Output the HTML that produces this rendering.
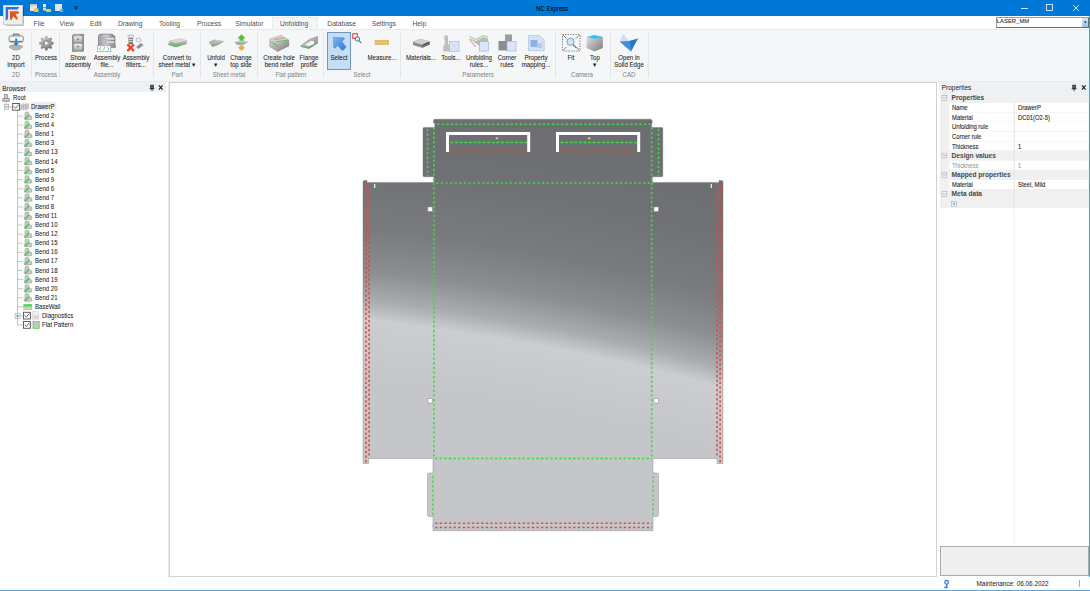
<!DOCTYPE html><html><head><meta charset="utf-8"><style>
*{margin:0;padding:0;box-sizing:border-box}
html,body{width:1090px;height:591px;overflow:hidden;background:#fdfdfd;font-family:"Liberation Sans",sans-serif;color:#1e1e1e}
.a{position:absolute}
.mi{position:absolute;font-size:6.7px;color:#505050;top:19.5px;line-height:7px;white-space:nowrap}
.t{position:absolute;font-size:6.6px;white-space:nowrap;line-height:7px;text-align:center;color:#1a1a1a;width:60px;-webkit-text-stroke:0.06px #1a1a1a;transform:scaleX(0.93);transform-origin:50% 0}
.g{position:absolute;font-size:6.6px;color:#7e7e7e;top:71px;line-height:7px;white-space:nowrap;text-align:center;width:80px;transform:scaleX(0.93);transform-origin:50% 0}
.sep{position:absolute;width:1px;top:32px;height:46px;background:#e4e5e7}
.tr{position:absolute;font-size:6.5px;white-space:nowrap;line-height:8px;color:#1a1a1a;-webkit-text-stroke:0.05px #1a1a1a;transform:scaleX(0.93);transform-origin:0 0}
.pr{position:absolute;font-size:6.9px;white-space:nowrap;line-height:8px;color:#1a1a1a;-webkit-text-stroke:0.1px currentColor;transform:scaleX(0.85);transform-origin:0 0}
svg{position:absolute;overflow:visible}
</style></head><body>
<div class="a" style="left:0;top:0;width:1090px;height:16px;background:#0078d7"></div>
<div class="a" style="left:536.4px;top:5px;font-size:6.9px;line-height:7px;color:#000;white-space:nowrap;-webkit-text-stroke:0.08px #000;transform:scaleX(0.88);transform-origin:0 0">NC Express</div>
<svg style="left:0;top:0" width="1090" height="16"><line x1="1021" y1="8.5" x2="1028" y2="8.5" stroke="#fff" stroke-width="0.8"/><rect x="1046.5" y="4.5" width="6" height="6" fill="none" stroke="#fff" stroke-width="0.8"/><path d="M1073 5 L1079 11 M1079 5 L1073 11" stroke="#fff" stroke-width="0.8"/><rect x="30" y="4" width="7" height="7" fill="#e8e8e8"/><rect x="30" y="4" width="7" height="1.5" fill="#bbb"/><rect x="34" y="8.5" width="4.5" height="3.5" fill="#f5c342"/><rect x="43" y="4" width="3" height="3" fill="#e6e6e6"/><rect x="43" y="7.5" width="3" height="3" fill="#d6d6d6"/><rect x="46" y="9" width="5" height="3" fill="#f5c342"/><rect x="55" y="4" width="7" height="7" fill="#e6e6e6"/><rect x="60" y="9" width="3" height="3" fill="#8aa8d8"/><path d="M74 7.5 L78 7.5 L76 10 Z" fill="#222"/><rect x="74" y="6" width="4" height="0.7" fill="#222"/></svg>
<div class="a" style="left:0;top:16px;width:1090px;height:13px;background:#fff"></div>
<div class="a" style="left:272px;top:16.5px;width:46px;height:13px;background:#f5f6f7;border:1px solid #e9e9e9;border-bottom:none"></div>
<div class="mi" style="left:33.6px">File</div>
<div class="mi" style="left:59.6px">View</div>
<div class="mi" style="left:90.0px">Edit</div>
<div class="mi" style="left:117.89999999999999px">Drawing</div>
<div class="mi" style="left:158.9px">Tooling</div>
<div class="mi" style="left:197.0px">Process</div>
<div class="mi" style="left:235.29999999999998px">Simulator</div>
<div class="mi" style="left:280.0px">Unfolding</div>
<div class="mi" style="left:327.3px">Database</div>
<div class="mi" style="left:371.70000000000005px">Settings</div>
<div class="mi" style="left:412.40000000000003px">Help</div>
<div class="a" style="left:3px;top:5px;width:20px;height:20.3px;background:#ededed;border:1px solid #d0d0d0;box-shadow:0.8px 0.8px 0.8px rgba(0,0,0,.25)"></div>
<svg style="left:0;top:0" width="30" height="30"><path d="M5.7 20.3 L5.7 7 L19.1 7 L17.8 9.5 L8.1 9.5 L8.1 18.5 L6.8 20.3 Z" fill="#356ed4"/><path d="M9.7 11.3 L17.6 11.3 Q19.2 11.9 18.9 13.4 L15.6 13.9 L17.9 18.6 L16.6 19.8 L13.3 16.2 L11.3 20.3 L10.2 20 Z" fill="#e0561a"/></svg>
<div class="a" style="left:996px;top:16.7px;width:93px;height:11px;background:#fff;border:1px solid #6a6a6a;border-top-color:#9a9a9a;border-left-color:#9a9a9a"></div>
<div class="a" style="left:996.8px;top:18.3px;font-size:5.9px;line-height:7px;color:#1a1a1a;white-space:nowrap;-webkit-text-stroke:0.05px #1a1a1a">LASER_MM</div>
<div class="a" style="left:1082.2px;top:17.6px;width:6.3px;height:9.3px;background:linear-gradient(#d4e5f7,#9ec2ea)"></div>
<svg style="left:0;top:0" width="1090" height="30"><path d="M1084 21.6 L1086.6 21.6 L1085.3 23.3Z" fill="#111"/></svg>
<div class="a" style="left:0;top:29px;width:1090px;height:53px;background:#f5f6f7;border-top:1px solid #e9eaec;border-bottom:1px solid #eaebed"></div>
<div class="a" style="left:327px;top:32px;width:24px;height:37.5px;background:#c6ddf6;border:1px solid #6f95c6"></div>
<div class="sep" style="left:30.5px"></div>
<div class="sep" style="left:58.7px"></div>
<div class="sep" style="left:152.9px"></div>
<div class="sep" style="left:200.1px"></div>
<div class="sep" style="left:256.8px"></div>
<div class="sep" style="left:323.2px"></div>
<div class="sep" style="left:400.3px"></div>
<div class="sep" style="left:555.2px"></div>
<div class="sep" style="left:609.5px"></div>
<div class="sep" style="left:647.7px"></div>
<div class="t" style="left:-13.8px;top:54px">2D</div>
<div class="t" style="left:-13.8px;top:61px">Import</div>
<div class="t" style="left:16.200000000000003px;top:54px">Process</div>
<div class="t" style="left:47.900000000000006px;top:54px">Show</div>
<div class="t" style="left:47.900000000000006px;top:61px">assembly</div>
<div class="t" style="left:77.3px;top:54px">Assembly</div>
<div class="t" style="left:77.3px;top:61px">file...</div>
<div class="t" style="left:106px;top:54px">Assembly</div>
<div class="t" style="left:106px;top:61px">filters...</div>
<div class="t" style="left:147.2px;top:54px">Convert to</div>
<div class="t" style="left:147.2px;top:61px">sheet metal ▾</div>
<div class="t" style="left:186.3px;top:54px">Unfold</div>
<div class="t" style="left:186.3px;top:61px">▾</div>
<div class="t" style="left:211.3px;top:54px">Change</div>
<div class="t" style="left:211.3px;top:61px">top side</div>
<div class="t" style="left:249.3px;top:54px">Create hole</div>
<div class="t" style="left:249.3px;top:61px">bend relief</div>
<div class="t" style="left:278.8px;top:54px">Flange</div>
<div class="t" style="left:278.8px;top:61px">profile</div>
<div class="t" style="left:309px;top:54px">Select</div>
<div class="t" style="left:352px;top:54px">Measure...</div>
<div class="t" style="left:391.3px;top:54px">Materials...</div>
<div class="t" style="left:420.9px;top:54px">Tools...</div>
<div class="t" style="left:448.9px;top:54px">Unfolding</div>
<div class="t" style="left:448.9px;top:61px">rules...</div>
<div class="t" style="left:476.6px;top:54px">Corner</div>
<div class="t" style="left:476.6px;top:61px">rules</div>
<div class="t" style="left:506px;top:54px">Property</div>
<div class="t" style="left:506px;top:61px">mapping...</div>
<div class="t" style="left:540.6px;top:54px">Fit</div>
<div class="t" style="left:564.5px;top:54px">Top</div>
<div class="t" style="left:564.5px;top:61px">▾</div>
<div class="t" style="left:599.2px;top:54px">Open in</div>
<div class="t" style="left:599.2px;top:61px">Solid Edge</div>
<div class="g" style="left:-23.8px">2D</div>
<div class="g" style="left:6.200000000000003px">Process</div>
<div class="g" style="left:67.3px">Assembly</div>
<div class="g" style="left:137.2px">Part</div>
<div class="g" style="left:189px">Sheet metal</div>
<div class="g" style="left:250.8px">Flat pattern</div>
<div class="g" style="left:322.2px">Select</div>
<div class="g" style="left:438.3px">Parameters</div>
<div class="g" style="left:542.4px">Camera</div>
<div class="g" style="left:589.2px">CAD</div>
<svg style="left:0;top:0" width="1090" height="82" viewBox="0 0 1090 82">
<defs>
<linearGradient id="gy" x1="0" y1="0" x2="0" y2="1"><stop offset="0" stop-color="#d8d8d8"/><stop offset="1" stop-color="#8c8c8c"/></linearGradient>
<linearGradient id="gy2" x1="0" y1="0" x2="1" y2="1"><stop offset="0" stop-color="#e6e6e6"/><stop offset="1" stop-color="#7a7a7a"/></linearGradient>
<linearGradient id="bl" x1="0" y1="0" x2="1" y2="1"><stop offset="0" stop-color="#7fb6f0"/><stop offset="1" stop-color="#2a78d6"/></linearGradient>
<radialGradient id="gear" cx="0.4" cy="0.3" r="0.8"><stop offset="0" stop-color="#d6d6d6"/><stop offset="1" stop-color="#5e5e5e"/></radialGradient>
</defs>
<path d="M12.8 36 L13.6 34.2 L18.6 34.2 L19.4 36" fill="none" stroke="#3c3c3c" stroke-width="0.9"/><rect x="9" y="35.8" width="14.3" height="6.2" rx="1.6" fill="#e2e2e2" stroke="#7f7f7f" stroke-width="0.8"/><rect x="10.2" y="37.6" width="11.9" height="2.2" fill="#fdfdfd"/><path d="M10 41.6 L22.3 41.6" stroke="#5a5a5a" stroke-width="0.8"/><path d="M8.5 46.5 Q12 43.8 16 44 Q21 44.2 23.5 46.6 Q20 50.5 15.5 50.5 Q11 50.2 8.5 46.5Z" fill="#b3b3b3"/><path d="M9.6 46.3 Q13 44.6 16 44.8 M18 50 Q21 49 22.5 47.3" fill="none" stroke="#4bcc4b" stroke-width="0.6" stroke-dasharray="1.2 0.9"/><rect x="15.2" y="38.4" width="1.9" height="5" fill="#1a8ae8"/><path d="M13.5 42.8 L18.8 42.8 L16.15 46.2Z" fill="#1a8ae8"/>
<path d="M53.64 42.25 L53.64 44.15 L51.81 44.65 L51.25 46.00 L52.19 47.65 L50.85 48.99 L49.20 48.05 L47.85 48.61 L47.35 50.44 L45.45 50.44 L44.95 48.61 L43.60 48.05 L41.95 48.99 L40.61 47.65 L41.55 46.00 L40.99 44.65 L39.16 44.15 L39.16 42.25 L40.99 41.75 L41.55 40.40 L40.61 38.75 L41.95 37.41 L43.60 38.35 L44.95 37.79 L45.45 35.96 L47.35 35.96 L47.85 37.79 L49.20 38.35 L50.85 37.41 L52.19 38.75 L51.25 40.40 L51.81 41.75Z" fill="url(#gear)"/>
<circle cx="46.4" cy="43.2" r="3.6" fill="#9a9a9a"/><path d="M45.1 40.900000000000006 L48.8 43.2 L45.1 45.5Z" fill="#f0f0f0"/>
<linearGradient id="cab" x1="0" y1="0" x2="1" y2="0"><stop offset="0" stop-color="#9a9a9a"/><stop offset="0.5" stop-color="#d2d2d2"/><stop offset="1" stop-color="#7c7c7c"/></linearGradient><linearGradient id="drw" x1="0" y1="0" x2="0" y2="1"><stop offset="0" stop-color="#f2f2f2"/><stop offset="1" stop-color="#a9a9a9"/></linearGradient>
<path d="M72.5 35.5 L74 34.3 L83.5 34.3 L83.5 51.2 L72.5 51.6Z" fill="url(#cab)" stroke="#5e5e5e" stroke-width="0.5"/><rect x="73.4" y="36" width="9.2" height="6.6" fill="url(#drw)" stroke="#777" stroke-width="0.4"/><rect x="73.4" y="43.6" width="9.2" height="6.6" fill="url(#drw)" stroke="#777" stroke-width="0.4"/><rect x="77" y="38.6" width="2" height="0.9" fill="#555"/><rect x="77" y="46.2" width="2" height="0.9" fill="#555"/>
<path d="M98.5 35.5 L100 34.1 L112 34.1 L115 36.5 L115 47.6 L98.5 47.6Z" fill="url(#cab)" stroke="#5e5e5e" stroke-width="0.5"/><rect x="105.5" y="37.5" width="9" height="2.4" fill="#e6e6e6" stroke="#777" stroke-width="0.3"/><rect x="105.5" y="41" width="9" height="2.4" fill="#dcdcdc" stroke="#777" stroke-width="0.3"/><rect x="111" y="44.5" width="5" height="3.2" fill="#9a9a9a"/><rect x="97.4" y="45.8" width="13.4" height="5.8" fill="#fff" stroke="#7ea4dc" stroke-width="0.7"/><path d="M101 47.2 L99.2 48.7 L101 50.2 M104.9 46.9 L103.3 50.5 M107.2 47.2 L109 48.7 L107.2 50.2" fill="none" stroke="#46b846" stroke-width="0.75"/>
<rect x="128" y="35" width="5.5" height="3" fill="#e6e6e6" stroke="#888" stroke-width="0.4"/><rect x="128.5" y="38" width="4.5" height="6.5" fill="#7d7d7d"/><rect x="129" y="39" width="3.5" height="1" fill="#cfd8e8"/><rect x="129" y="41" width="3.5" height="1" fill="#cfd8e8"/><path d="M127.3 44.5 L134 51 M134 44.5 L127.3 51" stroke="#ee3a1a" stroke-width="2.1"/><ellipse cx="138.5" cy="40" rx="2.5" ry="2" fill="none" stroke="#aaa" stroke-width="0.8"/><path d="M136 47 L141 43 L143.5 45 L138.5 49Z" fill="#8f8f8f"/>
<path d="M170 41 L180 38.7 L186.5 40.5 L186.5 43.5 L176 46.8 L168.3 44.5Z" fill="url(#gy)" stroke="#8c8c8c" stroke-width="0.4"/><path d="M170 41 L180 38.7 L186.5 40.5 L176 43Z" fill="#d9d9d9"/><path d="M168.5 44.5 L176 46.8 L186.5 43.5" fill="none" stroke="#3ed23e" stroke-width="0.8"/>
<path d="M208.5 42 L214 39.3 L224.4 41 L218 45 L212.5 46.9 Z" fill="url(#gy)"/><path d="M210 42.5 L216 40" stroke="#47c447" stroke-width="0.6"/><path d="M217 44.7 L223 41.7" stroke="#47c447" stroke-width="0.6"/>
<path d="M241.5 34.3 L245.6 38.5 L243.5 38.5 L243.5 41 L239.5 41 L239.5 38.5 L237.4 38.5Z" fill="#4fc52d"/><path d="M234 42 L240 40.5 L249 41.5 L244 44.5 L237 44.8Z" fill="url(#gy)"/><path d="M239.5 45.2 L243.5 45.2 L243.5 47.3 L245.5 47.3 L241.5 51 L237.5 47.3 L239.5 47.3Z" fill="#e0b44a"/>
<path d="M269.8 39 L281 35.5 L288.8 40 L288.8 46 L277.5 51.5 L269.8 46.5Z" fill="url(#gy2)" stroke="#6a6a6a" stroke-width="0.4"/><path d="M269.8 39 L281 35.5 L288.8 40 L277.5 43.5Z" fill="#cfcfcf"/><path d="M274 39.5 L284 38" stroke="#de5050" stroke-width="0.5"/><path d="M276 42 L288 40" stroke="#35c935" stroke-width="0.9"/><path d="M271 42 L277.5 46" stroke="#35c935" stroke-width="0.9"/>
<path d="M300.9 45.5 L310 39 L317.6 36.3 L317.6 43 L309 48.4 L300.9 46.5Z" fill="url(#gy2)" stroke="#7a7a7a" stroke-width="0.4"/><path d="M305 45 L311 41 L314 41 L314 44 L309 46Z" fill="#f5f6f7"/><path d="M301 46.3 L309 48.3 L317.5 43" fill="none" stroke="#35c935" stroke-width="0.9"/>
<path d="M333.3 37.2 L343.6 37.8 Q345.2 38.4 344.2 39.6 L341.8 41.6 L345.6 46.2 Q346.2 47.3 345.2 48.3 L343.2 50 Q342.2 50.6 341.4 49.8 L337.6 45.6 L335.2 48 Q334 48.6 333.7 47.4 Z" fill="url(#bl)" stroke="#3a7ad0" stroke-width="0.4"/>
<rect x="352.8" y="33.8" width="4.5" height="4.5" fill="#fff" stroke="#e22" stroke-width="1"/><circle cx="357.5" cy="39" r="2.2" fill="#dfe9f7" stroke="#2a58a8" stroke-width="0.8"/><path d="M359 40.6 L361.3 43" stroke="#222" stroke-width="0.9"/>
<rect x="374.8" y="40" width="14.2" height="4.9" fill="#e4bd58"/><path d="M376 42.5 L388 42.5" stroke="#fff7d8" stroke-width="0.6" stroke-dasharray="1 1"/>
<path d="M413 42 L420 38.7 L429.7 41.6 L429.7 44.6 L422 47.8 L413 45Z" fill="#8c8c8c"/><path d="M413 42 L420 38.7 L429.7 41.6 L422 44.8Z" fill="#d0d0d0"/><path d="M422 44.8 L429.7 41.6 L429.7 44.6 L422 47.8Z" fill="#6a6a6a"/><path d="M424.5 44.2 L428.8 42.4" stroke="#444" stroke-width="0.9"/>
<path d="M444 36 Q446 34.5 448 36 L448 44 L451 46 L451 51.5 L443.2 51.5 L443.2 46 L445 44Z" fill="#c0c0c0"/><rect x="449.5" y="41.5" width="9.5" height="10" fill="#dbe7f7" stroke="#8fb1e0" stroke-width="0.6"/><path d="M451 43 L457.5 50 M457.5 43 L451 50" stroke="#a9c2e6" stroke-width="0.4"/>
<path d="M469.5 36.5 L476 39.5 L483 35.5 L488 37" fill="none" stroke="#5ac45a" stroke-width="0.7"/><path d="M469.5 38 L476 41 L483 37 L488 38.5 L488 43 L481 47 L476 43.5 Z" fill="#b9b9b9"/><path d="M469.5 39 L475.5 47" stroke="#cc4a4a" stroke-width="0.7"/><rect x="479.5" y="41.5" width="9" height="9.6" fill="#dbe7f7" stroke="#8fb1e0" stroke-width="0.6"/>
<rect x="505" y="34.4" width="7" height="7" fill="#9c9c9c"/><rect x="498.5" y="41" width="9" height="9.5" fill="#8d8d8d"/><rect x="507" y="41.5" width="9" height="9.5" fill="#dbe7f7" stroke="#8fb1e0" stroke-width="0.6"/>
<path d="M528.5 35.5 L539 35.5 L544.2 40 L544.2 50.6 L528.5 50.6Z" fill="#d5e2f5" stroke="#9fb9df" stroke-width="0.6"/><rect x="530.5" y="40" width="7" height="7" fill="#8fb0de"/><rect x="537" y="43" width="5" height="5" fill="#b5cbea"/>
<rect x="562.5" y="34.5" width="17.5" height="16.5" fill="none" stroke="#333" stroke-width="0.6" stroke-dasharray="1.4 1.2"/><path d="M563.5 35.5 L566.5 38.5 M579 35.5 L576 38.5 M563.5 50 L566.5 47 M579 50 L576 47" stroke="#333" stroke-width="0.6"/><circle cx="570.5" cy="41.8" r="3.6" fill="#cfe3f7" stroke="#6a8cb4" stroke-width="0.8"/><path d="M573 44.5 L576.5 48" stroke="#777" stroke-width="1.2"/>
<path d="M586.6 37 L594.5 35 L602.8 37 L602.8 48 L594.5 51.6 L586.6 48Z" fill="url(#gy2)"/><path d="M586.6 37 L594.5 35 L602.8 37 L594.5 39Z" fill="#30c8f0"/>
<path d="M623 33.8 L629 41 L638 38.5 L631 51.6 L619.6 41.5Z" fill="#cfe0f2"/><path d="M619.6 41.5 L629 41 L631 51.6Z" fill="#3a8fe0"/><path d="M629 41 L638 38.5 L631 51.6Z" fill="#2577cf"/>
</svg>
<div class="a" style="left:0;top:82px;width:169px;height:495px;background:#fff"></div>
<div class="a" style="left:0;top:82px;width:166px;height:10px;background:#edf1f7"></div>
<div class="a" style="left:2.2px;top:84.5px;font-size:6.5px;line-height:7px;color:#222;white-space:nowrap">Browser</div>
<svg style="left:0;top:0" width="170" height="100"><rect x="150.7" y="85.2" width="2.6" height="3.3" fill="#666" stroke="#1e1e1e" stroke-width="0.8"/><path d="M149.5 88.8 L154.5 88.8 M152 89 L152 91.2" stroke="#1e1e1e" stroke-width="0.8"/><path d="M158.9 85.4 L162.6 89.6 M162.6 85.4 L158.9 89.6" stroke="#1e1e1e" stroke-width="1.15"/></svg>
<svg style="left:0;top:0" width="170" height="340">
<line x1="6.4" y1="101.5" x2="6.4" y2="104.2" stroke="#a8a8a8" stroke-width="0.7"/>
<line x1="8.8" y1="106.98500000000001" x2="12.2" y2="106.98500000000001" stroke="#a8a8a8" stroke-width="0.7"/>
<line x1="17.6" y1="110.2" x2="17.6" y2="325.52500000000003" stroke="#b0b0b0" stroke-width="0.8"/>
<line x1="17.6" y1="116.07000000000001" x2="23.2" y2="116.07000000000001" stroke="#b0b0b0" stroke-width="0.7"/>
<line x1="17.6" y1="125.155" x2="23.2" y2="125.155" stroke="#b0b0b0" stroke-width="0.7"/>
<line x1="17.6" y1="134.24" x2="23.2" y2="134.24" stroke="#b0b0b0" stroke-width="0.7"/>
<line x1="17.6" y1="143.32500000000002" x2="23.2" y2="143.32500000000002" stroke="#b0b0b0" stroke-width="0.7"/>
<line x1="17.6" y1="152.41000000000003" x2="23.2" y2="152.41000000000003" stroke="#b0b0b0" stroke-width="0.7"/>
<line x1="17.6" y1="161.495" x2="23.2" y2="161.495" stroke="#b0b0b0" stroke-width="0.7"/>
<line x1="17.6" y1="170.58" x2="23.2" y2="170.58" stroke="#b0b0b0" stroke-width="0.7"/>
<line x1="17.6" y1="179.66500000000002" x2="23.2" y2="179.66500000000002" stroke="#b0b0b0" stroke-width="0.7"/>
<line x1="17.6" y1="188.75" x2="23.2" y2="188.75" stroke="#b0b0b0" stroke-width="0.7"/>
<line x1="17.6" y1="197.835" x2="23.2" y2="197.835" stroke="#b0b0b0" stroke-width="0.7"/>
<line x1="17.6" y1="206.92000000000002" x2="23.2" y2="206.92000000000002" stroke="#b0b0b0" stroke-width="0.7"/>
<line x1="17.6" y1="216.00500000000002" x2="23.2" y2="216.00500000000002" stroke="#b0b0b0" stroke-width="0.7"/>
<line x1="17.6" y1="225.09000000000003" x2="23.2" y2="225.09000000000003" stroke="#b0b0b0" stroke-width="0.7"/>
<line x1="17.6" y1="234.175" x2="23.2" y2="234.175" stroke="#b0b0b0" stroke-width="0.7"/>
<line x1="17.6" y1="243.26000000000002" x2="23.2" y2="243.26000000000002" stroke="#b0b0b0" stroke-width="0.7"/>
<line x1="17.6" y1="252.34500000000003" x2="23.2" y2="252.34500000000003" stroke="#b0b0b0" stroke-width="0.7"/>
<line x1="17.6" y1="261.43000000000006" x2="23.2" y2="261.43000000000006" stroke="#b0b0b0" stroke-width="0.7"/>
<line x1="17.6" y1="270.515" x2="23.2" y2="270.515" stroke="#b0b0b0" stroke-width="0.7"/>
<line x1="17.6" y1="279.6" x2="23.2" y2="279.6" stroke="#b0b0b0" stroke-width="0.7"/>
<line x1="17.6" y1="288.68500000000006" x2="23.2" y2="288.68500000000006" stroke="#b0b0b0" stroke-width="0.7"/>
<line x1="17.6" y1="297.77" x2="23.2" y2="297.77" stroke="#b0b0b0" stroke-width="0.7"/>
<line x1="17.6" y1="306.855" x2="23.2" y2="306.855" stroke="#b0b0b0" stroke-width="0.7"/>
<line x1="17.6" y1="315.94000000000005" x2="14.9" y2="315.94000000000005" stroke="#b0b0b0" stroke-width="0.7"/>
<line x1="20.1" y1="315.94000000000005" x2="23" y2="315.94000000000005" stroke="#b0b0b0" stroke-width="0.7"/>
<line x1="17.6" y1="325.02500000000003" x2="23.2" y2="325.02500000000003" stroke="#b0b0b0" stroke-width="0.7"/>
<rect x="4.3" y="94.3" width="3.2" height="4" fill="#cfcfcf" stroke="#7a7a7a" stroke-width="0.6"/><rect x="2.8" y="98.3" width="6.8" height="3" fill="#9c9c9c" stroke="#7a7a7a" stroke-width="0.4"/><rect x="3.6" y="99.3" width="5.2" height="0.9" fill="#f2f2f2"/>
<rect x="4.3" y="104.4" width="4.4" height="5" fill="#f4f4f4" stroke="#9c9c9c" stroke-width="0.6"/><line x1="5.2" y1="106.9" x2="7.8" y2="106.9" stroke="#4a6fc7" stroke-width="0.7"/>
<rect x="12.649999999999999" y="103.45" width="6.9" height="6.7" fill="#fff" stroke="#505050" stroke-width="0.9"/><path d="M13.799999999999999 106.4 L15.6 108.3 L18.6 104.6" fill="none" stroke="#3a3a3a" stroke-width="0.75"/>
<path d="M20.6 110.3 L20.6 105.2 L23.200000000000003 103.2 L23.200000000000003 108.3 Z" fill="#cdcdcd" stroke="#9a9a9a" stroke-width="0.45"/>
<path d="M23.3 110.3 L23.3 105.2 L25.900000000000002 103.2 L25.900000000000002 108.3 Z" fill="#cdcdcd" stroke="#9a9a9a" stroke-width="0.45"/>
<path d="M26.0 110.3 L26.0 105.2 L28.6 103.2 L28.6 108.3 Z" fill="#cdcdcd" stroke="#9a9a9a" stroke-width="0.45"/>
<rect x="30.8" y="102.2" width="25.5" height="8.4" fill="#ececec"/>
<path d="M25 116.27000000000001 L25 113.27000000000001 Q25 112.07000000000001 26.5 112.07000000000001 L27.8 112.07000000000001 Q29 112.07000000000001 29 113.27000000000001 L29 115.77000000000001 L30.8 115.87 Q31.8 116.07000000000001 31.8 117.07000000000001 L31.8 118.67 Q31.8 119.57000000000001 30.8 119.57000000000001 L25.8 119.57000000000001 Q24 119.57000000000001 24 117.87 Z" fill="#c9c9c9" stroke="#8c8c8c" stroke-width="0.5"/><path d="M25.3 118.97000000000001 L28.7 115.17" stroke="#2fd02f" stroke-width="1.3" stroke-linecap="round"/>
<path d="M25 125.355 L25 122.355 Q25 121.155 26.5 121.155 L27.8 121.155 Q29 121.155 29 122.355 L29 124.855 L30.8 124.955 Q31.8 125.155 31.8 126.155 L31.8 127.755 Q31.8 128.655 30.8 128.655 L25.8 128.655 Q24 128.655 24 126.955 Z" fill="#c9c9c9" stroke="#8c8c8c" stroke-width="0.5"/><path d="M25.3 128.055 L28.7 124.255" stroke="#2fd02f" stroke-width="1.3" stroke-linecap="round"/>
<path d="M25 134.44 L25 131.44 Q25 130.24 26.5 130.24 L27.8 130.24 Q29 130.24 29 131.44 L29 133.94 L30.8 134.04000000000002 Q31.8 134.24 31.8 135.24 L31.8 136.84 Q31.8 137.74 30.8 137.74 L25.8 137.74 Q24 137.74 24 136.04000000000002 Z" fill="#c9c9c9" stroke="#8c8c8c" stroke-width="0.5"/><path d="M25.3 137.14000000000001 L28.7 133.34" stroke="#2fd02f" stroke-width="1.3" stroke-linecap="round"/>
<path d="M25 143.525 L25 140.525 Q25 139.32500000000002 26.5 139.32500000000002 L27.8 139.32500000000002 Q29 139.32500000000002 29 140.525 L29 143.025 L30.8 143.12500000000003 Q31.8 143.32500000000002 31.8 144.32500000000002 L31.8 145.925 Q31.8 146.82500000000002 30.8 146.82500000000002 L25.8 146.82500000000002 Q24 146.82500000000002 24 145.12500000000003 Z" fill="#c9c9c9" stroke="#8c8c8c" stroke-width="0.5"/><path d="M25.3 146.22500000000002 L28.7 142.425" stroke="#2fd02f" stroke-width="1.3" stroke-linecap="round"/>
<path d="M25 152.61 L25 149.61 Q25 148.41000000000003 26.5 148.41000000000003 L27.8 148.41000000000003 Q29 148.41000000000003 29 149.61 L29 152.11 L30.8 152.21000000000004 Q31.8 152.41000000000003 31.8 153.41000000000003 L31.8 155.01000000000002 Q31.8 155.91000000000003 30.8 155.91000000000003 L25.8 155.91000000000003 Q24 155.91000000000003 24 154.21000000000004 Z" fill="#c9c9c9" stroke="#8c8c8c" stroke-width="0.5"/><path d="M25.3 155.31000000000003 L28.7 151.51000000000002" stroke="#2fd02f" stroke-width="1.3" stroke-linecap="round"/>
<path d="M25 161.695 L25 158.695 Q25 157.495 26.5 157.495 L27.8 157.495 Q29 157.495 29 158.695 L29 161.195 L30.8 161.29500000000002 Q31.8 161.495 31.8 162.495 L31.8 164.095 Q31.8 164.995 30.8 164.995 L25.8 164.995 Q24 164.995 24 163.29500000000002 Z" fill="#c9c9c9" stroke="#8c8c8c" stroke-width="0.5"/><path d="M25.3 164.395 L28.7 160.595" stroke="#2fd02f" stroke-width="1.3" stroke-linecap="round"/>
<path d="M25 170.78 L25 167.78 Q25 166.58 26.5 166.58 L27.8 166.58 Q29 166.58 29 167.78 L29 170.28 L30.8 170.38000000000002 Q31.8 170.58 31.8 171.58 L31.8 173.18 Q31.8 174.08 30.8 174.08 L25.8 174.08 Q24 174.08 24 172.38000000000002 Z" fill="#c9c9c9" stroke="#8c8c8c" stroke-width="0.5"/><path d="M25.3 173.48000000000002 L28.7 169.68" stroke="#2fd02f" stroke-width="1.3" stroke-linecap="round"/>
<path d="M25 179.865 L25 176.865 Q25 175.66500000000002 26.5 175.66500000000002 L27.8 175.66500000000002 Q29 175.66500000000002 29 176.865 L29 179.365 L30.8 179.46500000000003 Q31.8 179.66500000000002 31.8 180.66500000000002 L31.8 182.26500000000001 Q31.8 183.16500000000002 30.8 183.16500000000002 L25.8 183.16500000000002 Q24 183.16500000000002 24 181.46500000000003 Z" fill="#c9c9c9" stroke="#8c8c8c" stroke-width="0.5"/><path d="M25.3 182.56500000000003 L28.7 178.76500000000001" stroke="#2fd02f" stroke-width="1.3" stroke-linecap="round"/>
<path d="M25 188.95 L25 185.95 Q25 184.75 26.5 184.75 L27.8 184.75 Q29 184.75 29 185.95 L29 188.45 L30.8 188.55 Q31.8 188.75 31.8 189.75 L31.8 191.35 Q31.8 192.25 30.8 192.25 L25.8 192.25 Q24 192.25 24 190.55 Z" fill="#c9c9c9" stroke="#8c8c8c" stroke-width="0.5"/><path d="M25.3 191.65 L28.7 187.85" stroke="#2fd02f" stroke-width="1.3" stroke-linecap="round"/>
<path d="M25 198.035 L25 195.035 Q25 193.835 26.5 193.835 L27.8 193.835 Q29 193.835 29 195.035 L29 197.535 L30.8 197.63500000000002 Q31.8 197.835 31.8 198.835 L31.8 200.435 Q31.8 201.335 30.8 201.335 L25.8 201.335 Q24 201.335 24 199.63500000000002 Z" fill="#c9c9c9" stroke="#8c8c8c" stroke-width="0.5"/><path d="M25.3 200.735 L28.7 196.935" stroke="#2fd02f" stroke-width="1.3" stroke-linecap="round"/>
<path d="M25 207.12 L25 204.12 Q25 202.92000000000002 26.5 202.92000000000002 L27.8 202.92000000000002 Q29 202.92000000000002 29 204.12 L29 206.62 L30.8 206.72000000000003 Q31.8 206.92000000000002 31.8 207.92000000000002 L31.8 209.52 Q31.8 210.42000000000002 30.8 210.42000000000002 L25.8 210.42000000000002 Q24 210.42000000000002 24 208.72000000000003 Z" fill="#c9c9c9" stroke="#8c8c8c" stroke-width="0.5"/><path d="M25.3 209.82000000000002 L28.7 206.02" stroke="#2fd02f" stroke-width="1.3" stroke-linecap="round"/>
<path d="M25 216.205 L25 213.205 Q25 212.00500000000002 26.5 212.00500000000002 L27.8 212.00500000000002 Q29 212.00500000000002 29 213.205 L29 215.705 L30.8 215.80500000000004 Q31.8 216.00500000000002 31.8 217.00500000000002 L31.8 218.60500000000002 Q31.8 219.50500000000002 30.8 219.50500000000002 L25.8 219.50500000000002 Q24 219.50500000000002 24 217.80500000000004 Z" fill="#c9c9c9" stroke="#8c8c8c" stroke-width="0.5"/><path d="M25.3 218.90500000000003 L28.7 215.10500000000002" stroke="#2fd02f" stroke-width="1.3" stroke-linecap="round"/>
<path d="M25 225.29000000000002 L25 222.29000000000002 Q25 221.09000000000003 26.5 221.09000000000003 L27.8 221.09000000000003 Q29 221.09000000000003 29 222.29000000000002 L29 224.79000000000002 L30.8 224.89000000000004 Q31.8 225.09000000000003 31.8 226.09000000000003 L31.8 227.69000000000003 Q31.8 228.59000000000003 30.8 228.59000000000003 L25.8 228.59000000000003 Q24 228.59000000000003 24 226.89000000000004 Z" fill="#c9c9c9" stroke="#8c8c8c" stroke-width="0.5"/><path d="M25.3 227.99000000000004 L28.7 224.19000000000003" stroke="#2fd02f" stroke-width="1.3" stroke-linecap="round"/>
<path d="M25 234.375 L25 231.375 Q25 230.175 26.5 230.175 L27.8 230.175 Q29 230.175 29 231.375 L29 233.875 L30.8 233.97500000000002 Q31.8 234.175 31.8 235.175 L31.8 236.775 Q31.8 237.675 30.8 237.675 L25.8 237.675 Q24 237.675 24 235.97500000000002 Z" fill="#c9c9c9" stroke="#8c8c8c" stroke-width="0.5"/><path d="M25.3 237.07500000000002 L28.7 233.275" stroke="#2fd02f" stroke-width="1.3" stroke-linecap="round"/>
<path d="M25 243.46 L25 240.46 Q25 239.26000000000002 26.5 239.26000000000002 L27.8 239.26000000000002 Q29 239.26000000000002 29 240.46 L29 242.96 L30.8 243.06000000000003 Q31.8 243.26000000000002 31.8 244.26000000000002 L31.8 245.86 Q31.8 246.76000000000002 30.8 246.76000000000002 L25.8 246.76000000000002 Q24 246.76000000000002 24 245.06000000000003 Z" fill="#c9c9c9" stroke="#8c8c8c" stroke-width="0.5"/><path d="M25.3 246.16000000000003 L28.7 242.36" stroke="#2fd02f" stroke-width="1.3" stroke-linecap="round"/>
<path d="M25 252.54500000000002 L25 249.54500000000002 Q25 248.34500000000003 26.5 248.34500000000003 L27.8 248.34500000000003 Q29 248.34500000000003 29 249.54500000000002 L29 252.04500000000002 L30.8 252.14500000000004 Q31.8 252.34500000000003 31.8 253.34500000000003 L31.8 254.94500000000002 Q31.8 255.84500000000003 30.8 255.84500000000003 L25.8 255.84500000000003 Q24 255.84500000000003 24 254.14500000000004 Z" fill="#c9c9c9" stroke="#8c8c8c" stroke-width="0.5"/><path d="M25.3 255.24500000000003 L28.7 251.44500000000002" stroke="#2fd02f" stroke-width="1.3" stroke-linecap="round"/>
<path d="M25 261.63000000000005 L25 258.63000000000005 Q25 257.43000000000006 26.5 257.43000000000006 L27.8 257.43000000000006 Q29 257.43000000000006 29 258.63000000000005 L29 261.13000000000005 L30.8 261.2300000000001 Q31.8 261.43000000000006 31.8 262.43000000000006 L31.8 264.0300000000001 Q31.8 264.93000000000006 30.8 264.93000000000006 L25.8 264.93000000000006 Q24 264.93000000000006 24 263.2300000000001 Z" fill="#c9c9c9" stroke="#8c8c8c" stroke-width="0.5"/><path d="M25.3 264.33000000000004 L28.7 260.5300000000001" stroke="#2fd02f" stroke-width="1.3" stroke-linecap="round"/>
<path d="M25 270.715 L25 267.715 Q25 266.515 26.5 266.515 L27.8 266.515 Q29 266.515 29 267.715 L29 270.215 L30.8 270.315 Q31.8 270.515 31.8 271.515 L31.8 273.115 Q31.8 274.015 30.8 274.015 L25.8 274.015 Q24 274.015 24 272.315 Z" fill="#c9c9c9" stroke="#8c8c8c" stroke-width="0.5"/><path d="M25.3 273.41499999999996 L28.7 269.615" stroke="#2fd02f" stroke-width="1.3" stroke-linecap="round"/>
<path d="M25 279.8 L25 276.8 Q25 275.6 26.5 275.6 L27.8 275.6 Q29 275.6 29 276.8 L29 279.3 L30.8 279.40000000000003 Q31.8 279.6 31.8 280.6 L31.8 282.20000000000005 Q31.8 283.1 30.8 283.1 L25.8 283.1 Q24 283.1 24 281.40000000000003 Z" fill="#c9c9c9" stroke="#8c8c8c" stroke-width="0.5"/><path d="M25.3 282.5 L28.7 278.70000000000005" stroke="#2fd02f" stroke-width="1.3" stroke-linecap="round"/>
<path d="M25 288.88500000000005 L25 285.88500000000005 Q25 284.68500000000006 26.5 284.68500000000006 L27.8 284.68500000000006 Q29 284.68500000000006 29 285.88500000000005 L29 288.38500000000005 L30.8 288.48500000000007 Q31.8 288.68500000000006 31.8 289.68500000000006 L31.8 291.2850000000001 Q31.8 292.18500000000006 30.8 292.18500000000006 L25.8 292.18500000000006 Q24 292.18500000000006 24 290.48500000000007 Z" fill="#c9c9c9" stroke="#8c8c8c" stroke-width="0.5"/><path d="M25.3 291.58500000000004 L28.7 287.7850000000001" stroke="#2fd02f" stroke-width="1.3" stroke-linecap="round"/>
<path d="M25 297.96999999999997 L25 294.96999999999997 Q25 293.77 26.5 293.77 L27.8 293.77 Q29 293.77 29 294.96999999999997 L29 297.46999999999997 L30.8 297.57 Q31.8 297.77 31.8 298.77 L31.8 300.37 Q31.8 301.27 30.8 301.27 L25.8 301.27 Q24 301.27 24 299.57 Z" fill="#c9c9c9" stroke="#8c8c8c" stroke-width="0.5"/><path d="M25.3 300.66999999999996 L28.7 296.87" stroke="#2fd02f" stroke-width="1.3" stroke-linecap="round"/>
<rect x="23.8" y="304.255" width="8" height="5.6" fill="#cfcfcf" stroke="#9a9a9a" stroke-width="0.4"/><rect x="23.8" y="304.255" width="8" height="2.4" fill="#44e244"/>
<rect x="15.1" y="313.44000000000005" width="5" height="5" fill="#f4f4f4" stroke="#a8a8a8" stroke-width="0.6"/><path d="M16.1 315.94000000000005 L19.1 315.94000000000005 M17.6 314.44000000000005 L17.6 317.44000000000005" stroke="#4a6fc7" stroke-width="0.7"/>
<rect x="23.45" y="312.29" width="6.9" height="6.7" fill="#fff" stroke="#505050" stroke-width="0.9"/><path d="M24.6 315.24 L26.4 317.14000000000004 L29.4 313.44000000000005" fill="none" stroke="#3a3a3a" stroke-width="0.75"/>
<path d="M32.5 311.44000000000005 L36.8 311.44000000000005 L38.9 313.5400000000001 L38.9 319.24000000000007 L32.5 319.24000000000007Z" fill="#f0f0f0" stroke="#c4c4c4" stroke-width="0.5"/><rect x="33.3" y="315.44000000000005" width="5" height="3" fill="#d5d5d5"/>
<rect x="23.45" y="321.57500000000005" width="6.9" height="6.7" fill="#fff" stroke="#505050" stroke-width="0.9"/><path d="M24.6 324.52500000000003 L26.4 326.42500000000007 L29.4 322.7250000000001" fill="none" stroke="#3a3a3a" stroke-width="0.75"/>
<rect x="33" y="321.52500000000003" width="6.2" height="7" fill="#c6c6c6" stroke="#9c9c9c" stroke-width="0.4"/><rect x="33" y="321.52500000000003" width="6.2" height="7" fill="none" stroke="#36d836" stroke-width="0.8" stroke-dasharray="1.2 1"/>
</svg>
<div class="tr" style="left:12.6px;top:93.90px">Root</div>
<div class="tr" style="left:31.2px;top:102.99px">DrawerP</div>
<div class="tr" style="left:34.5px;top:112.07px">Bend 2</div>
<div class="tr" style="left:34.5px;top:121.16px">Bend 4</div>
<div class="tr" style="left:34.5px;top:130.24px">Bend 1</div>
<div class="tr" style="left:34.5px;top:139.33px">Bend 3</div>
<div class="tr" style="left:34.5px;top:148.41px">Bend 13</div>
<div class="tr" style="left:34.5px;top:157.50px">Bend 14</div>
<div class="tr" style="left:34.5px;top:166.58px">Bend 5</div>
<div class="tr" style="left:34.5px;top:175.67px">Bend 9</div>
<div class="tr" style="left:34.5px;top:184.75px">Bend 6</div>
<div class="tr" style="left:34.5px;top:193.84px">Bend 7</div>
<div class="tr" style="left:34.5px;top:202.92px">Bend 8</div>
<div class="tr" style="left:34.5px;top:212.01px">Bend 11</div>
<div class="tr" style="left:34.5px;top:221.09px">Bend 10</div>
<div class="tr" style="left:34.5px;top:230.18px">Bend 12</div>
<div class="tr" style="left:34.5px;top:239.26px">Bend 15</div>
<div class="tr" style="left:34.5px;top:248.35px">Bend 16</div>
<div class="tr" style="left:34.5px;top:257.43px">Bend 17</div>
<div class="tr" style="left:34.5px;top:266.51px">Bend 18</div>
<div class="tr" style="left:34.5px;top:275.60px">Bend 19</div>
<div class="tr" style="left:34.5px;top:284.69px">Bend 20</div>
<div class="tr" style="left:34.5px;top:293.77px">Bend 21</div>
<div class="tr" style="left:34.5px;top:302.86px">BaseWall</div>
<div class="tr" style="left:41.800000000000004px;top:311.94px">Diagnostics</div>
<div class="tr" style="left:41.800000000000004px;top:321.03px">Flat Pattern</div>
<div class="a" style="left:169px;top:82px;width:768px;height:495px;background:#fff;border:1px solid #d2d2d2;box-shadow:-1px 0 0 #ebebeb"></div>
<svg style="left:0;top:0" width="1090" height="591" viewBox="0 0 1090 591">
<defs><radialGradient id="rg" gradientUnits="userSpaceOnUse" cx="86" cy="2769" r="2800"><stop offset="0.0000" stop-color="#c3c5c8"/><stop offset="0.8586" stop-color="#c4c6c9"/><stop offset="0.8804" stop-color="#cbcdd0"/><stop offset="0.8875" stop-color="#a9abae"/><stop offset="0.8982" stop-color="#8b8d90"/><stop offset="0.9125" stop-color="#797b7e"/><stop offset="0.9339" stop-color="#6f7174"/><stop offset="0.9771" stop-color="#6a6c6f"/></radialGradient></defs>
<path d="M 434 119.2 L 651 119.2 L 652.6 121.5 L 651.6 123.7 L 651.6 127.4 L 661.8 127.4 Q 662.8 127.4 662.8 128.4 L 662.8 175.8 Q 662.8 176.8 661.8 176.8 L 652.3 176.8 L 652.3 182.4 L 719 182.4 L 719 180.5 L 722 180.5 L 723 181.5 L 723 463.5 L 717.2 463.5 L 717.2 458.5 L 653 458.5 L 653 473 L 657.5 473 L 658.5 474 L 658.5 515.5 L 657.5 516.5 L 653 516.5 L 653 530.7 L 433 530.7 L 433 527 L 432.3 525.5 L 433 523.5 L 433 516.5 L 428.5 516.5 L 427.5 515.5 L 427.5 474 L 428.5 473 L 433 473 L 433 458.5 L 368.6 458.5 L 368.6 463.5 L 363 463.5 L 363 181.5 L 364 180.5 L 367 180.5 L 367 182.4 L 433.8 182.4 L 433.8 176.8 L 424 176.8 Q 423 176.8 423 175.8 L 423 128.4 Q 423 127.4 424 127.4 L 434.8 127.4 L 434.8 123.7 L 433.2 122 Z" fill="url(#rg)" stroke="#5d5f62" stroke-opacity="0.45" stroke-width="0.7"/>
<line x1="437" y1="124.2" x2="650" y2="124.2" stroke="#3ddc3d" stroke-width="1.6" stroke-dasharray="2.3 2.3"/>
<line x1="436.2" y1="183" x2="652" y2="183" stroke="#3ddc3d" stroke-width="1.6" stroke-dasharray="2.3 2.3"/>
<line x1="435" y1="458.5" x2="652" y2="458.5" stroke="#3ddc3d" stroke-width="1.3" stroke-dasharray="2.5 2.1"/>
<line x1="427.5" y1="129" x2="427.5" y2="176" stroke="#3ddc3d" stroke-width="1.6" stroke-dasharray="2.3 2.3"/>
<line x1="434.0" y1="127.5" x2="434.0" y2="458.4" stroke="#3ddc3d" stroke-width="1.6" stroke-dasharray="2.3 2.3"/>
<line x1="658.5" y1="129" x2="658.5" y2="176" stroke="#3ddc3d" stroke-width="1.6" stroke-dasharray="2.3 2.3"/>
<line x1="651.7" y1="127.5" x2="651.7" y2="458.4" stroke="#3ddc3d" stroke-width="1.6" stroke-dasharray="2.3 2.3"/>
<line x1="432.8" y1="476" x2="432.8" y2="516" stroke="#3ddc3d" stroke-width="1.4" stroke-dasharray="2.3 2.3"/>
<line x1="653.2" y1="476" x2="653.2" y2="516" stroke="#3ddc3d" stroke-width="1.4" stroke-dasharray="2.3 2.3"/>
<path d="M 447.5 152 L 447.5 133.5 L 528.7 133.5 L 528.7 152" fill="none" stroke="#fff" stroke-width="3"/>
<line x1="450.5" y1="142.5" x2="527" y2="142.5" stroke="#3ddc3d" stroke-width="1.3" stroke-dasharray="3 1.6"/>
<line x1="449.5" y1="151" x2="527" y2="151" stroke="#d0473c" stroke-width="1.5" stroke-dasharray="2.3 2.3"/>
<circle cx="496.9" cy="138.3" r="1.3" fill="#e6ddd2" stroke="#8d6436" stroke-width="0.6"/>
<path d="M 557.5 152 L 557.5 133.5 L 638.7 133.5 L 638.7 152" fill="none" stroke="#fff" stroke-width="3"/>
<line x1="560.5" y1="142.5" x2="637" y2="142.5" stroke="#3ddc3d" stroke-width="1.3" stroke-dasharray="3 1.6"/>
<line x1="559.5" y1="151" x2="637" y2="151" stroke="#d0473c" stroke-width="1.5" stroke-dasharray="2.3 2.3"/>
<circle cx="589.1" cy="138.3" r="1.3" fill="#e6ddd2" stroke="#8d6436" stroke-width="0.6"/>
<line x1="366" y1="184" x2="366" y2="463" stroke="#e8463f" stroke-width="1.6" stroke-dasharray="2.3 2.3"/>
<line x1="369.1" y1="183" x2="369.1" y2="458" stroke="#e8463f" stroke-width="1.6" stroke-dasharray="2.3 2.3" stroke-dashoffset="1.1"/>
<line x1="717" y1="183" x2="717" y2="458" stroke="#e8463f" stroke-width="1.6" stroke-dasharray="2.3 2.3" stroke-dashoffset="1.1"/>
<line x1="720.1" y1="184" x2="720.1" y2="463" stroke="#e8463f" stroke-width="1.6" stroke-dasharray="2.3 2.3"/>
<line x1="435.2" y1="523.3" x2="652" y2="523.3" stroke="#e8463f" stroke-width="1.6" stroke-dasharray="2.3 2.3"/>
<line x1="435.2" y1="527.5" x2="652" y2="527.5" stroke="#e8463f" stroke-width="1.6" stroke-dasharray="2.3 2.3"/>
<rect x="427.8" y="206.9" width="4.6" height="4.6" rx="0.5" fill="#fff" stroke="#8c8c8c" stroke-width="0.6"/>
<rect x="653.9" y="206.9" width="4.6" height="4.6" rx="0.5" fill="#fff" stroke="#8c8c8c" stroke-width="0.6"/>
<rect x="427.8" y="398.5" width="4.6" height="4.6" rx="0.5" fill="#fff" stroke="#8c8c8c" stroke-width="0.6"/>
<rect x="653.9" y="398.5" width="4.6" height="4.6" rx="0.5" fill="#fff" stroke="#8c8c8c" stroke-width="0.6"/>
<rect x="374.09999999999997" y="184" width="1.2" height="4" fill="#f4f4f4"/>
<rect x="710.6999999999999" y="184" width="1.2" height="4" fill="#f4f4f4"/>
</svg>
<div class="a" style="left:939px;top:82px;width:150px;height:495px;background:#fff"></div>
<div class="a" style="left:939px;top:82px;width:150px;height:10px;background:#edf1f7"></div>
<div class="a" style="left:941.7px;top:84.3px;font-size:6.5px;line-height:7px;color:#222;white-space:nowrap">Properties</div>
<svg style="left:0;top:0" width="1090" height="100"><rect x="1072.8" y="85.2" width="2.6" height="3.3" fill="#666" stroke="#1e1e1e" stroke-width="0.8"/><path d="M1071.6 88.8 L1076.6 88.8 M1074.1 89 L1074.1 91.2" stroke="#1e1e1e" stroke-width="0.8"/><path d="M1081.9 85.4 L1085.6 89.6 M1085.6 85.4 L1081.9 89.6" stroke="#1e1e1e" stroke-width="1.15"/></svg>
<div class="a" style="left:939.5px;top:92.3px;width:149px;height:116px;background:#f0f0f0"></div>
<svg style="left:0;top:0" width="1090" height="591">
<rect x="942" y="95.40" width="4.8" height="4.8" fill="#f7f7f7" stroke="#a0a0a0" stroke-width="0.5"/><line x1="943" y1="97.80" x2="945.8" y2="97.80" stroke="#5b7cc4" stroke-width="0.6"/>
<rect x="949.3" y="102.91" width="139" height="9.03" fill="#fff"/>
<rect x="949.3" y="112.55" width="139" height="9.03" fill="#fff"/>
<rect x="949.3" y="122.17" width="139" height="9.03" fill="#fff"/>
<rect x="949.3" y="131.81" width="139" height="9.03" fill="#fff"/>
<rect x="949.3" y="141.44" width="139" height="9.03" fill="#fff"/>
<rect x="942" y="153.18" width="4.8" height="4.8" fill="#f7f7f7" stroke="#a0a0a0" stroke-width="0.5"/><line x1="943" y1="155.58" x2="945.8" y2="155.58" stroke="#5b7cc4" stroke-width="0.6"/>
<rect x="949.3" y="160.70" width="139" height="9.03" fill="#fff"/>
<rect x="942" y="172.44" width="4.8" height="4.8" fill="#f7f7f7" stroke="#a0a0a0" stroke-width="0.5"/><line x1="943" y1="174.84" x2="945.8" y2="174.84" stroke="#5b7cc4" stroke-width="0.6"/>
<rect x="949.3" y="179.96" width="139" height="9.03" fill="#fff"/>
<rect x="942" y="191.70" width="4.8" height="4.8" fill="#f7f7f7" stroke="#a0a0a0" stroke-width="0.5"/><line x1="943" y1="194.10" x2="945.8" y2="194.10" stroke="#5b7cc4" stroke-width="0.6"/>
<rect x="951.7" y="201.33" width="4.8" height="4.8" fill="#eef2fa" stroke="#a0a0a0" stroke-width="0.5"/><path d="M952.9 203.73 L955.3 203.73 M954.1 202.53 L954.1 204.93" stroke="#5b7cc4" stroke-width="0.6"/>
<line x1="1014.3" y1="102.5" x2="1014.3" y2="545" stroke="#ededed" stroke-width="0.8"/>
<line x1="1014.3" y1="102.5" x2="1014.3" y2="208.4" stroke="#e4e4e4" stroke-width="0.8"/>
</svg>
<div class="a" style="left:951.6px;top:93.80px;font-size:6.6px;font-weight:bold;line-height:8px;color:#484848;white-space:nowrap">Properties</div>
<div class="pr" style="left:951.8px;top:104.03px;color:#1e1e1e;letter-spacing:0">Name</div>
<div class="pr" style="left:1017.7px;top:104.03px;color:#1e1e1e;letter-spacing:0">DrawerP</div>
<div class="pr" style="left:951.8px;top:113.66px;color:#1e1e1e;letter-spacing:0">Material</div>
<div class="pr" style="left:1017.7px;top:113.66px;color:#1e1e1e;letter-spacing:0">DC01(O2-5)</div>
<div class="pr" style="left:951.8px;top:123.29px;color:#1e1e1e;letter-spacing:0">Unfolding rule</div>
<div class="pr" style="left:951.8px;top:132.92px;color:#1e1e1e;letter-spacing:0">Corner rule</div>
<div class="pr" style="left:951.8px;top:142.55px;color:#1e1e1e;letter-spacing:0">Thickness</div>
<div class="pr" style="left:1017.7px;top:142.55px;color:#1e1e1e;letter-spacing:0">1</div>
<div class="a" style="left:951.6px;top:151.58px;font-size:6.6px;font-weight:bold;line-height:8px;color:#484848;white-space:nowrap">Design values</div>
<div class="pr" style="left:951.8px;top:161.81px;color:#9a9a9a;letter-spacing:0">Thickness</div>
<div class="pr" style="left:1017.7px;top:161.81px;color:#9a9a9a;letter-spacing:0">1</div>
<div class="a" style="left:951.6px;top:170.84px;font-size:6.6px;font-weight:bold;line-height:8px;color:#484848;white-space:nowrap">Mapped properties</div>
<div class="pr" style="left:951.8px;top:181.07px;color:#1e1e1e;letter-spacing:0">Material</div>
<div class="pr" style="left:1017.7px;top:181.07px;color:#1e1e1e;letter-spacing:0">Steel, Mild</div>
<div class="a" style="left:951.6px;top:190.10px;font-size:6.6px;font-weight:bold;line-height:8px;color:#484848;white-space:nowrap">Meta data</div>
<div class="a" style="left:940px;top:546px;width:149px;height:30px;background:#efefef;border:1px solid #ababab"></div>
<div class="a" style="left:1089px;top:16px;width:1px;height:575px;background:#4d9ae0"></div>
<div class="a" style="left:0;top:577px;width:1090px;height:14px;background:#fdfdfd"></div>
<div class="a" style="left:0;top:590px;width:1090px;height:1px;background:#5fa6df"></div>
<div class="a" style="left:976.5px;top:579.5px;font-size:6.4px;line-height:7px;color:#222;white-space:nowrap">Maintenance: 06.06.2022</div>
<div class="a" style="left:1078.5px;top:580px;width:1px;height:7px;background:#7fb2e5"></div>
<svg style="left:0;top:0" width="1090" height="591"><circle cx="946.6" cy="582.3" r="1.9" fill="#d6e4f6" stroke="#3d78cc" stroke-width="1.1"/><rect x="945.9" y="584" width="1.5" height="4.2" fill="#3d78cc"/><rect x="944.3" y="586.7" width="2.4" height="1.5" fill="#3d78cc"/></svg>
</body></html>
